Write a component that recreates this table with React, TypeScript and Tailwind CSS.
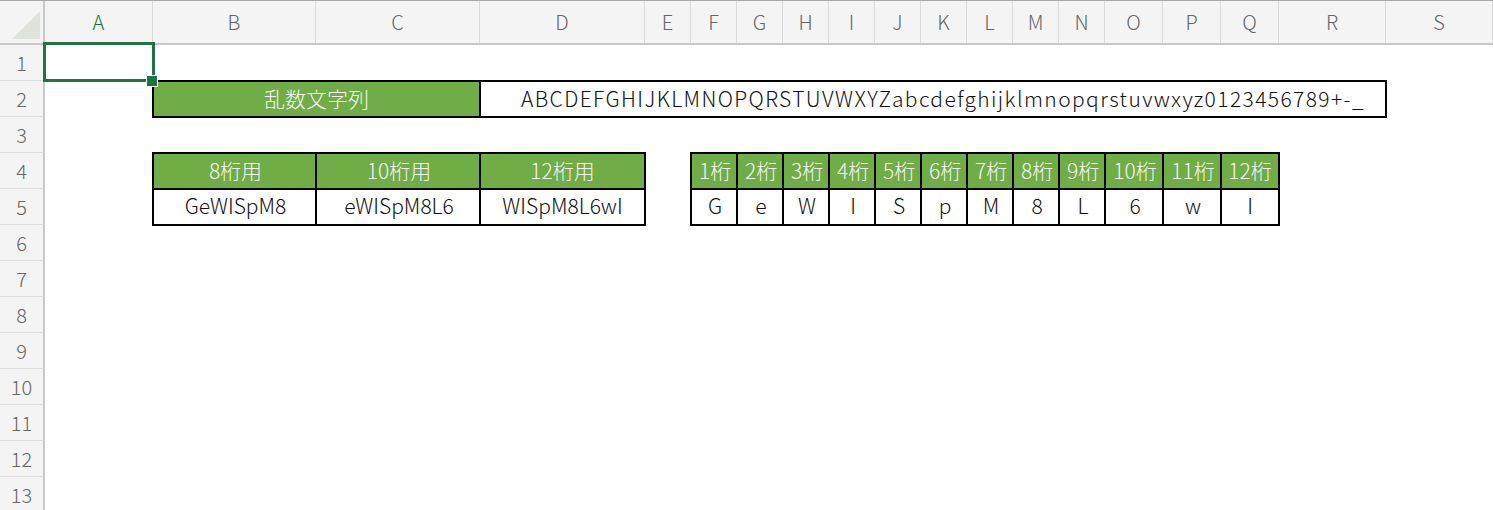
const COLS =
  "grid grid-cols-[45px_108px_163px_164px_165px_repeat(10,46px)_58px_58px_58px_107px_107px]";

const LETTERS = ["A", "B", "C", "D", "E", "F", "G", "H", "I", "J", "K", "L", "M", "N", "O", "P", "Q", "R", "S"];

const DIGIT_START = [
  "col-start-7", "col-start-8", "col-start-9", "col-start-10", "col-start-11", "col-start-12",
  "col-start-13", "col-start-14", "col-start-15", "col-start-16", "col-start-17", "col-start-18",
];
const LEN_START = ["col-start-3", "col-start-4", "col-start-5"];

const lengths = [
  { head: "8桁用", value: "GeWISpM8" },
  { head: "10桁用", value: "eWISpM8L6" },
  { head: "12桁用", value: "WISpM8L6wI" },
];
const digits = ["G", "e", "W", "I", "S", "p", "M", "8", "L", "6", "w", "I"];

function Row({ n, children }: { n: number; children?: React.ReactNode }) {
  return (
    <div className={`${COLS} h-[36px]`}>
      <div className="flex items-center justify-center bg-[#f4f4f4] border-r-2 border-r-[#c8c8c8] border-b border-b-[#dedede] text-[20px] text-[#666]">
        {n}
      </div>
      {children}
    </div>
  );
}

export default function App() {
  const head = "-mx-px -my-px flex items-center justify-center border-l-2 border-y-2 border-black bg-[#70ad47] text-[#f4f4f4]";
  const body = "-mx-px -my-px flex items-center justify-center border-l-2 border-b-2 border-black text-[#111]";

  return (
    <div className="h-[510px] w-[1493px] overflow-hidden bg-white font-['Noto_Sans_CJK_JP',sans-serif] font-light">
      <div className={`${COLS} h-[45px] border-t border-t-[#a9a9a9] border-b-2 border-b-[#c8c8c8] bg-[#f4f4f4]`}>
        <div className="border-r-2 border-r-[#c8c8c8]">
          <svg width="43" height="42" viewBox="0 0 43 42">
            <polygon points="40,10 40,38 12,38" fill="#dfe3dc" />
          </svg>
        </div>
        {LETTERS.map((l) => (
          <div
            key={l}
            className={`flex items-center justify-center border-r border-r-[#dadada] text-[20px] ${
              l === "A" ? "text-[#217346]" : "text-[#666]"
            }`}
          >
            {l}
          </div>
        ))}
      </div>

      <Row n={1}>
        <div className="relative z-10 col-start-2">
          <div className="absolute -top-[3px] -bottom-px -left-[2px] -right-[2px] border-[3px] border-[#217346]" />
          <div className="absolute -right-[5px] -bottom-[6px] h-[12px] w-[12px] border border-white bg-[#217346]" />
        </div>
      </Row>

      <Row n={2}>
        <div className="col-start-3 col-span-2 -mx-px -my-px flex items-center justify-center border-2 border-black bg-[#70ad47] text-[21px] text-[#f4f4f4]">
          乱数文字列
        </div>
        <div className="col-start-5 col-span-15 -mx-px -my-px flex items-center justify-center border-2 border-black pl-[20px] text-[21px] tracking-[1.4px] text-[#111]">
          ABCDEFGHIJKLMNOPQRSTUVWXYZabcdefghijklmnopqrstuvwxyz0123456789+-_
        </div>
      </Row>

      <Row n={3} />

      <Row n={4}>
        {lengths.map((c, i) => (
          <div key={c.head} className={`${LEN_START[i]} ${head} text-[21px] ${i === 2 ? "border-r-2" : ""}`}>
            {c.head}
          </div>
        ))}
        {digits.map((_, i) => (
          <div key={i} className={`${DIGIT_START[i]} ${head} text-[21px] ${i === 11 ? "border-r-2" : ""}`}>
            {i + 1}桁
          </div>
        ))}
      </Row>

      <Row n={5}>
        {lengths.map((c, i) => (
          <div key={c.value} className={`${LEN_START[i]} ${body} text-[21px] ${i === 2 ? "border-r-2" : ""}`}>
            {c.value}
          </div>
        ))}
        {digits.map((d, i) => (
          <div key={i} className={`${DIGIT_START[i]} ${body} text-[21px] ${i === 11 ? "border-r-2" : ""}`}>
            {d}
          </div>
        ))}
      </Row>

      {[6, 7, 8, 9, 10, 11, 12, 13].map((n) => (
        <Row key={n} n={n} />
      ))}
    </div>
  );
}
